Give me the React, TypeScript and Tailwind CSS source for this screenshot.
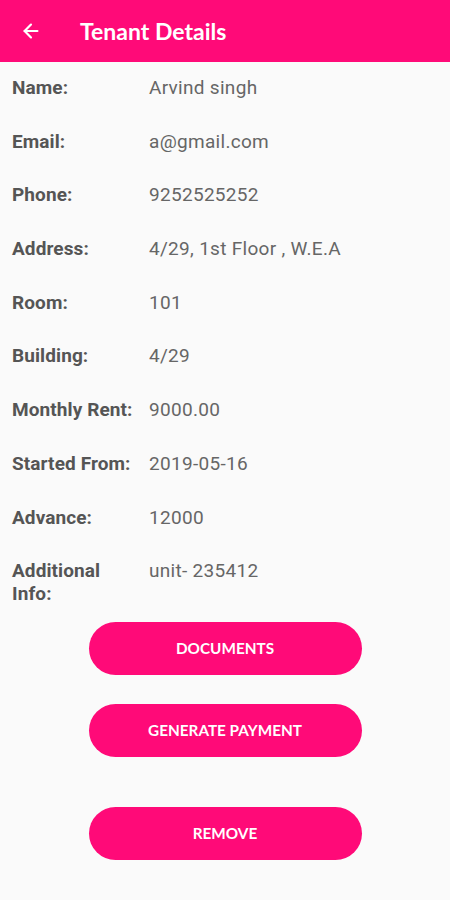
import { ArrowLeft } from "lucide-react";

const ROWS = [
  { label: "Name:", value: "Arvind singh" },
  { label: "Email:", value: "a@gmail.com" },
  { label: "Phone:", value: "9252525252" },
  { label: "Address:", value: "4/29, 1st Floor , W.E.A" },
  { label: "Room:", value: "101" },
  { label: "Building:", value: "4/29" },
  { label: "Monthly Rent:", value: "9000.00" },
  { label: "Started From:", value: "2019-05-16" },
  { label: "Advance:", value: "12000" },
  { label: "Additional Info:", value: "unit- 235412" },
];

function PillButton({ children }: { children: React.ReactNode }) {
  return (
    <button className="w-[273px] h-[53px] rounded-full bg-[#ff0a78] text-white text-[15.3px] font-bold font-['Lato',sans-serif]">
      {children}
    </button>
  );
}

export default function App() {
  return (
    <div className="w-[450px] h-[900px] bg-[#fafafa] font-['Roboto',sans-serif] overflow-hidden">
      {/* App bar */}
      <div className="h-[62px] bg-[#ff0a78] flex items-center">
        <ArrowLeft size={22} strokeWidth={2.4} className="text-white ml-[20px]" />
        <h1 className="ml-[38px] text-white text-[23px] font-bold font-['Lato',sans-serif]">
          Tenant Details
        </h1>
      </div>

      {/* Details */}
      <div>
        {ROWS.map((r) => (
          <div key={r.label} className="flex items-start h-[53.7px] pt-[14px]">
            <span className="w-[149px] shrink-0 pl-3 pr-3 text-[19px] leading-[23px] tracking-[0.1px] font-bold text-[#555]">
              {r.label}
            </span>
            <span className="text-[19px] leading-[23px] tracking-[0.3px] text-[#666]">{r.value}</span>
          </div>
        ))}
      </div>

      {/* Actions */}
      <div className="flex flex-col items-center mt-[23px]">
        <PillButton>DOCUMENTS</PillButton>
        <div className="mt-[29px]">
          <PillButton>GENERATE PAYMENT</PillButton>
        </div>
        <div className="mt-[50px]">
          <PillButton>REMOVE</PillButton>
        </div>
      </div>
    </div>
  );
}
